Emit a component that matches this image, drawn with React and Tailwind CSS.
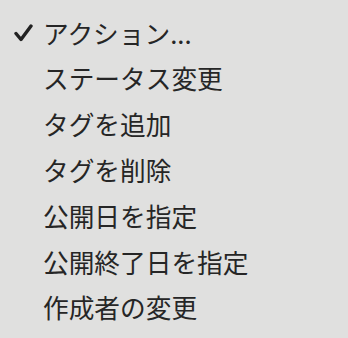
import React from "react";

const items = [
  "ステータス変更",
  "タグを追加",
  "タグを削除",
  "公開日を指定",
  "公開終了日を指定",
  "作成者の変更",
];

const Check = () => (
  <svg width="19" height="18" viewBox="0 0 19 18" className="block">
    <path
      d="M2 9.5 L7 15.5 L17 2"
      fill="none"
      stroke="#222"
      strokeWidth="3.4"
      strokeLinecap="round"
      strokeLinejoin="round"
    />
  </svg>
);

export default function App() {
  return (
    <div
      className="w-[348px] h-[338px] bg-[#e0e0df] pt-[10px] text-[#262626] text-[25.7px]"
      style={{ fontFamily: '"Noto Sans CJK JP", "Noto Sans", sans-serif' }}
    >
      <ul>
        <li className="flex h-[45.8px] items-center">
          <span className="w-[43px] flex justify-end pr-[10px]">
            <Check />
          </span>
          <span>アクション...</span>
        </li>
        {items.map((t) => (
          <li key={t} className="flex h-[45.8px] items-center pl-[43px]">
            {t}
          </li>
        ))}
      </ul>
    </div>
  );
}
